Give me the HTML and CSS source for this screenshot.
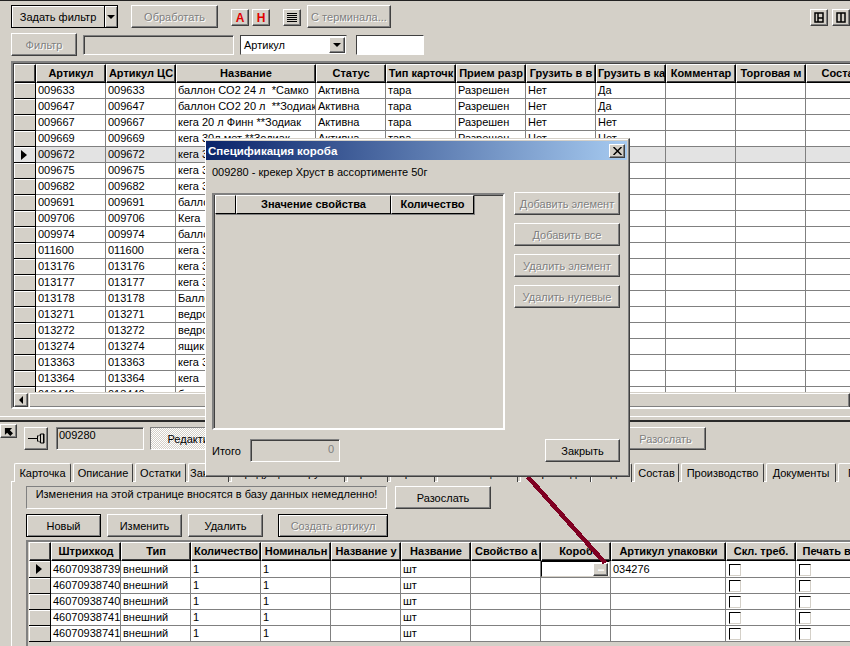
FILE: index.html
```html
<!DOCTYPE html>
<html lang="ru">
<head>
    <meta charset="UTF-8">
    <title>Спецификация короба</title>
    <link rel="stylesheet" href="styles.css">
</head>
<body>
    <!-- Top toolbar -->
    <div class="toolbar">
        <button class="btn btn-filter">Задать фильтр</button>
        <button class="btn btn-drop"><span class="tri-down"></span></button>
        <button class="btn btn-process" disabled>Обработать</button>
        <button class="btn btn-small btn-red btn-a">А</button>
        <button class="btn btn-small btn-red btn-h">Н</button>
        <button class="btn btn-small btn-list">
            <svg width="10" height="9" viewBox="0 0 10 9"><path d="M0 .5h10M0 2.5h10M0 4.5h10M0 6.5h10M0 8.5h10" stroke="#000"/></svg>
        </button>
        <button class="btn btn-terminal" disabled>С терминала...</button>
        <button class="btn btn-small btn-view">
            <svg width="10" height="11" viewBox="0 0 10 11"><path d="M1 1h8v9H1zM4 1v9M4 6h5" fill="none" stroke="#000" stroke-width="1.5"/></svg>
        </button>
        <button class="btn btn-small btn-view2">
            <svg width="10" height="11" viewBox="0 0 10 11"><path d="M1 1h8v9H1zM5 1v9" fill="none" stroke="#000" stroke-width="1.5"/></svg>
        </button>
    </div>

    <div class="filter-row">
        <button class="btn btn-apply" disabled>Фильтр</button>
        <div class="sunken filter-text"></div>
        <div class="combo">
            <span class="combo-value">Артикул</span>
            <span class="btn combo-arrow"><span class="tri-down"></span></span>
        </div>
        <div class="filter-input"></div>
    </div>

    <!-- Articles grid -->
    <div class="grid grid-main">
        <div class="grid-scroll">
            <table class="table table-main">
                <colgroup>
                    <col class="col-ind"><col class="col-n"><col class="col-n"><col class="col-name"><col class="col-n"><col class="col-n"><col class="col-n"><col class="col-n"><col class="col-n"><col class="col-n"><col class="col-n"><col class="col-n">
                </colgroup>
                <tr><th></th><th>Артикул</th><th>Артикул ЦС</th><th>Название</th><th>Статус</th><th>Тип карточк</th><th>Прием разр</th><th>Грузить в в</th><th>Грузить в ка</th><th>Комментар</th><th>Торговая м</th><th>Состав</th></tr>
                <tr><td class="ind"></td><td>009633</td><td>009633</td><td>баллон СО2 24 л &nbsp;*Самко</td><td>Активна</td><td>тара</td><td>Разрешен</td><td>Нет</td><td>Да</td><td></td><td></td><td></td></tr>
                <tr><td class="ind"></td><td>009647</td><td>009647</td><td>баллон СО2 20 л &nbsp;**Зодиак</td><td>Активна</td><td>тара</td><td>Разрешен</td><td>Нет</td><td>Да</td><td></td><td></td><td></td></tr>
                <tr><td class="ind"></td><td>009667</td><td>009667</td><td>кега 20 л Финн **Зодиак</td><td>Активна</td><td>тара</td><td>Разрешен</td><td>Нет</td><td>Нет</td><td></td><td></td><td></td></tr>
                <tr><td class="ind"></td><td>009669</td><td>009669</td><td>кега 30л мет **Зодиак</td><td>Активна</td><td>тара</td><td>Разрешен</td><td>Нет</td><td>Нет</td><td></td><td></td><td></td></tr>
                <tr class="current"><td class="ind"><span class="tri-right"></span></td><td>009672</td><td>009672</td><td>кега 30л</td><td></td><td></td><td></td><td></td><td></td><td></td><td></td><td></td></tr>
                <tr><td class="ind"></td><td>009675</td><td>009675</td><td>кега 30л</td><td></td><td></td><td></td><td></td><td></td><td></td><td></td><td></td></tr>
                <tr><td class="ind"></td><td>009682</td><td>009682</td><td>кега 30л</td><td></td><td></td><td></td><td></td><td></td><td></td><td></td><td></td></tr>
                <tr><td class="ind"></td><td>009691</td><td>009691</td><td>баллон</td><td></td><td></td><td></td><td></td><td></td><td></td><td></td><td></td></tr>
                <tr><td class="ind"></td><td>009706</td><td>009706</td><td>Кега</td><td></td><td></td><td></td><td></td><td></td><td></td><td></td><td></td></tr>
                <tr><td class="ind"></td><td>009974</td><td>009974</td><td>баллон</td><td></td><td></td><td></td><td></td><td></td><td></td><td></td><td></td></tr>
                <tr><td class="ind"></td><td>011600</td><td>011600</td><td>кега 30л</td><td></td><td></td><td></td><td></td><td></td><td></td><td></td><td></td></tr>
                <tr><td class="ind"></td><td>013176</td><td>013176</td><td>кега 30л</td><td></td><td></td><td></td><td></td><td></td><td></td><td></td><td></td></tr>
                <tr><td class="ind"></td><td>013177</td><td>013177</td><td>кега 30л</td><td></td><td></td><td></td><td></td><td></td><td></td><td></td><td></td></tr>
                <tr><td class="ind"></td><td>013178</td><td>013178</td><td>Баллон</td><td></td><td></td><td></td><td></td><td></td><td></td><td></td><td></td></tr>
                <tr><td class="ind"></td><td>013271</td><td>013271</td><td>ведро</td><td></td><td></td><td></td><td></td><td></td><td></td><td></td><td></td></tr>
                <tr><td class="ind"></td><td>013272</td><td>013272</td><td>ведро</td><td></td><td></td><td></td><td></td><td></td><td></td><td></td><td></td></tr>
                <tr><td class="ind"></td><td>013274</td><td>013274</td><td>ящик</td><td></td><td></td><td></td><td></td><td></td><td></td><td></td><td></td></tr>
                <tr><td class="ind"></td><td>013363</td><td>013363</td><td>кега 30л</td><td></td><td></td><td></td><td></td><td></td><td></td><td></td><td></td></tr>
                <tr><td class="ind"></td><td>013364</td><td>013364</td><td>кега</td><td></td><td></td><td></td><td></td><td></td><td></td><td></td><td></td></tr>
                <tr><td class="ind"></td><td>013440</td><td>013440</td><td>баллон</td><td></td><td></td><td></td><td></td><td></td><td></td><td></td><td></td></tr>
            </table>
        </div>
        <div class="hscroll">
            <span class="btn scroll-left"><span class="tri-left"></span></span>
            <span class="btn scroll-thumb"></span>
        </div>
    </div>

    <div class="splitter"></div>

    <!-- Card header -->
    <div class="card-bar">
        <button class="btn btn-collapse">
            <svg width="9" height="9" viewBox="0 0 10 10"><path d="M1 1h8L6.500 3.500 10 7l-3 3-3.500-3.500L1 9z"/></svg>
        </button>
        <div class="card-tools">
            <button class="btn btn-pin">
                <svg width="17" height="11" viewBox="0 0 17 11"><path d="M0 5.500h9M9.500 2.500v6M10 3.500l2-2M10 7.500l2 2M12.500 1h3.500v9h-3.500zM15.500 1v9" fill="none" stroke="#000"/></svg>
            </button>
            <div class="sunken card-code">009280</div>
            <button class="btn btn-edit">Редактировать</button>
            <button class="btn btn-send-off" disabled>Разослать</button>
        </div>
    </div>

    <div class="tabs">
        <div class="tab">Карточка</div>
        <div class="tab">Описание</div>
        <div class="tab">Остатки</div>
        <div class="tab">Заказы</div>
        <div class="tab">Продукция и группы</div>
        <div class="tab">Цены</div>
        <div class="tab">Сроки</div>
        <div class="tab">Поставщики</div>
        <div class="tab tab-active">Штрихкоды</div>
        <div class="tab">Коды</div>
        <div class="tab">Состав</div>
        <div class="tab">Производство</div>
        <div class="tab">Документы</div>
        <div class="tab">Прочее</div>
    </div>

    <div class="page">
        <div class="info-row">
            <div class="info">Изменения на этой странице вносятся в базу данных немедленно!</div>
            <button class="btn btn-send">Разослать</button>
        </div>
        <div class="actions">
            <button class="btn btn-default btn-action">Новый</button>
            <button class="btn btn-action">Изменить</button>
            <button class="btn btn-action">Удалить</button>
            <button class="btn btn-default btn-create" disabled>Создать артикул</button>
        </div>
        <div class="grid grid-codes">
            <table class="table table-codes">
                <colgroup>
                    <col class="col-ind"><col class="col-n"><col class="col-n"><col class="col-n"><col class="col-n"><col class="col-n"><col class="col-n"><col class="col-n"><col class="col-n"><col class="col-pack"><col class="col-n"><col class="col-n">
                </colgroup>
                <tr><th></th><th>Штрихкод</th><th>Тип</th><th>Количество</th><th>Номинальн</th><th>Название у</th><th>Название</th><th>Свойство а</th><th>Короб</th><th>Артикул упаковки</th><th>Скл. треб.</th><th>Печать в к</th></tr>
                <tr><td class="ind"><span class="tri-right"></span></td><td>46070938739</td><td>внешний</td><td>1</td><td>1</td><td></td><td>шт</td><td></td><td class="cell-edit"><div class="editor"><span class="btn editor-btn">...</span></div></td><td>034276</td><td><span class="check"></span></td><td><span class="check"></span></td></tr>
                <tr><td class="ind"></td><td>46070938740</td><td>внешний</td><td>1</td><td>1</td><td></td><td>шт</td><td></td><td></td><td></td><td><span class="check"></span></td><td><span class="check"></span></td></tr>
                <tr><td class="ind"></td><td>46070938740</td><td>внешний</td><td>1</td><td>1</td><td></td><td>шт</td><td></td><td></td><td></td><td><span class="check"></span></td><td><span class="check"></span></td></tr>
                <tr><td class="ind"></td><td>46070938741</td><td>внешний</td><td>1</td><td>1</td><td></td><td>шт</td><td></td><td></td><td></td><td><span class="check"></span></td><td><span class="check"></span></td></tr>
                <tr><td class="ind"></td><td>46070938741</td><td>внешний</td><td>1</td><td>1</td><td></td><td>шт</td><td></td><td></td><td></td><td><span class="check"></span></td><td><span class="check"></span></td></tr>
            </table>
        </div>
    </div>

    <!-- Red annotation line drawn on the screenshot -->
    <svg class="arrow" width="90" height="100" viewBox="0 0 90 100">
        <path d="M3 6L80 92" fill="none" stroke="#7f0022" stroke-width="4.500"/>
    </svg>

    <!-- Dialog -->
    <div class="dialog">
        <div class="dialog-title">
            <span>Спецификация короба</span>
            <button class="btn dialog-close">
                <svg width="9" height="8" viewBox="0 0 9 8"><path d="M.5 0l8 8M8.500 0l-8 8" stroke="#000" stroke-width="1.500"/></svg>
            </button>
        </div>
        <div class="dialog-body">
            <div class="dialog-label">009280 - крекер Хруст в ассортименте 50г</div>
            <div class="dialog-main">
                <div class="grid grid-spec">
                    <div class="spec-head">
                        <div class="hcell spec-ind"></div>
                        <div class="hcell spec-value">Значение свойства</div>
                        <div class="hcell spec-qty">Количество</div>
                    </div>
                </div>
                <div class="dialog-buttons">
                    <button class="btn btn-side" disabled>Добавить элемент</button>
                    <button class="btn btn-side" disabled>Добавить все</button>
                    <button class="btn btn-side" disabled>Удалить элемент</button>
                    <button class="btn btn-side" disabled>Удалить нулевые</button>
                </div>
            </div>
            <div class="dialog-footer">
                <span class="total-label">Итого</span>
                <div class="sunken total">0</div>
                <button class="btn btn-close">Закрыть</button>
            </div>
        </div>
    </div>
</body>
</html>
```

FILE: styles.css
```css
:root {
    --bg: #d4d0c8;
    --line: #808080;
    --dark: #404040;
}

* {
    margin: 0;
    padding: 0;
    box-sizing: border-box;
    font-family: "Liberation Sans", Arial, sans-serif;
    font-size: 11px;
}

html, body {
    width: 850px;
    height: 646px;
    overflow: hidden;
}

body {
    position: relative;
    background-color: var(--bg);
    color: #000;
    border-top: 1px solid #222;
}

/* Buttons */
.btn {
    display: flex;
    align-items: center;
    justify-content: center;
    flex: none;
    height: 23px;
    background-color: var(--bg);
    border: 1px solid;
    border-color: #fff var(--dark) var(--dark) #fff;
    box-shadow: inset -1px -1px var(--line);
    color: #000;
    white-space: nowrap;
}

.btn:disabled {
    color: var(--line);
    text-shadow: 1px 1px #fff;
}

.btn-default {
    border-color: #000;
    box-shadow: inset 1px 1px #fff, inset -1px -1px var(--line);
}

.btn-small {
    width: 18px;
    height: 17px;
    margin-top: 4px;
}

.btn-red {
    color: #e00000;
    font-weight: bold;
    font-size: 12px;
}

.sunken {
    border: 1px solid;
    border-color: var(--line) #fff #fff var(--line);
    box-shadow: inset 1px 1px var(--dark);
}

.tri-down {
    border-left: 4px solid transparent;
    border-right: 4px solid transparent;
    border-top: 4px solid #000;
}

.tri-left {
    border-top: 4px solid transparent;
    border-bottom: 4px solid transparent;
    border-right: 4px solid #000;
}

.tri-right {
    display: block;
    margin-left: 7px;
    border-top: 5px solid transparent;
    border-bottom: 5px solid transparent;
    border-left: 6px solid #000;
}

/* Toolbar */
.toolbar {
    display: flex;
    align-items: flex-start;
    height: 32px;
    padding: 4px 0 0 11px;
}

.btn-filter {
    width: 93px;
    border-color: #000;
    border-right: none;
    box-shadow: inset 1px 1px #fff;
}

.btn-drop {
    width: 14px;
    border-color: #000;
    box-shadow: inset 1px 1px #fff, inset -1px -1px var(--line);
}

.btn-process {
    width: 87px;
    margin-left: 13px;
}

.btn-a {
    margin-left: 13px;
}

.btn-h {
    margin-left: 3px;
}

.btn-list {
    margin-left: 13px;
}

.btn-terminal {
    width: 84px;
    margin-left: 6px;
}

.btn-view {
    margin-left: 419px;
}

.btn-view2 {
    margin-left: 4px;
}

/* Filter line */
.filter-row {
    display: flex;
    align-items: flex-start;
    height: 28px;
    padding-left: 11px;
}

.btn-apply {
    width: 66px;
}

.filter-text {
    width: 151px;
    height: 20px;
    margin: 2px 0 0 6px;
}

.combo {
    display: flex;
    justify-content: space-between;
    width: 107px;
    height: 20px;
    margin: 2px 0 0 6px;
    padding: 1px;
    background-color: #fff;
    border: 1px solid;
    border-color: var(--dark) var(--bg) var(--bg) var(--dark);
}

.combo-value {
    padding-left: 2px;
    line-height: 17px;
}

.combo-arrow {
    width: 16px;
    height: 16px;
}

.filter-input {
    width: 68px;
    height: 20px;
    margin: 2px 0 0 9px;
    background-color: #fff;
    border: 1px solid;
    border-color: var(--dark) #fff #fff var(--dark);
}

/* Data grids */
.grid {
    border: 2px solid;
    border-color: var(--line) #fff #fff var(--line);
    box-shadow: inset 1px 1px var(--dark);
    overflow: hidden;
}

.grid-main {
    height: 348px;
    margin-left: 11px;
    padding: 1px 0 0 1px;
    border-right: none;
}

.grid-scroll {
    height: 328px;
    overflow: hidden;
}

.table {
    table-layout: fixed;
    border-collapse: separate;
    border-spacing: 0;
}

.table-main {
    width: 862px;
}

.table-codes {
    width: 837px;
}

.col-ind {
    width: 22px;
}

.col-n {
    width: 70px;
}

.col-name {
    width: 140px;
}

.col-pack {
    width: 115px;
}

.table th {
    height: 19px;
    padding: 0 1px 2px;
    overflow: hidden;
    white-space: nowrap;
    background-color: var(--bg);
    border: 1px solid;
    border-color: #fff #000 #000 #fff;
    box-shadow: inset -1px -1px var(--dark);
    font-weight: bold;
    text-align: center;
}

.table td {
    height: 16px;
    padding: 0 2px;
    overflow: hidden;
    white-space: nowrap;
    background-color: #fff;
    border-right: 1px solid var(--line);
    border-bottom: 1px solid var(--line);
    line-height: 15px;
}

.table tr.current td {
    background-color: #e3e3e3;
}

.table td.ind {
    padding: 0;
    background-color: var(--bg);
    border-right: 1px solid #000;
    border-bottom: 1px solid #000;
    box-shadow: inset 1px 1px #fff;
}

/* Bottom scrollbar */
.hscroll {
    display: flex;
    height: 15px;
    margin-top: 1px;
    gap: 1px;
}

.scroll-left {
    width: 14px;
    height: 14px;
}

.scroll-thumb {
    flex: 1;
    height: 15px;
}

.splitter {
    height: 6px;
    margin-top: 7px;
    border-top: 1px solid #fff;
    border-bottom: 2px solid #2a2a2a;
}

/* Card header */
.card-bar {
    display: flex;
    align-items: flex-start;
    height: 41px;
    padding-top: 2px;
}

.btn-collapse {
    width: 17px;
    height: 14px;
}

.card-tools {
    display: flex;
    margin: 3px 0 0 7px;
}

.btn-pin {
    width: 24px;
}

.card-code {
    width: 88px;
    height: 23px;
    margin-left: 8px;
    padding: 1px 2px;
}

.btn-edit {
    width: 111px;
    margin-left: 6px;
    border-color: var(--line) #fff #fff var(--line);
    box-shadow: none;
    background: repeating-conic-gradient(#fff 0 25%, var(--bg) 0 50%) 0 0 / 2px 2px;
}

.btn-send-off {
    width: 81px;
    margin-left: 364px;
}

/* Tabs */
.tabs {
    display: grid;
    grid-template-columns: 59px 62px 53px 43px 116px 43px 47px 83px 71px 43px 47px 85px 72px 60px;
    height: 18px;
    padding-left: 14px;
    overflow-x: clip;
}

.tab {
    overflow: hidden;
    margin-right: 2px;
    padding-top: 3px;
    background-color: var(--bg);
    border-top: 1px solid #fff;
    border-left: 1px solid #fff;
    border-right: 1px solid var(--dark);
    border-radius: 2px 2px 0 0;
    white-space: nowrap;
    text-align: center;
}

.tab-active {
    position: relative;
    z-index: 1;
    height: 19px;
    margin-right: 0;
}

.page {
    height: 170px;
    margin-left: 11px;
    padding: 4px 0 0 14px;
    border-top: 1px solid #fff;
    border-left: 1px solid #fff;
}

.info-row {
    display: flex;
    gap: 8px;
}

.info {
    width: 361px;
    height: 23px;
    padding-top: 1px;
    border: 1px solid;
    border-color: var(--line) #fff #fff var(--line);
    text-align: center;
}

.btn-send {
    width: 96px;
}

.actions {
    display: flex;
    gap: 6px;
    margin-top: 5px;
}

.btn-action {
    width: 75px;
}

.btn-create {
    width: 110px;
    margin-left: 9px;
}

.grid-codes {
    width: 824px;
    height: 120px;
    margin-top: 3px;
    padding-left: 1px;
    border-right: none;
    border-bottom: none;
    box-shadow: none;
}

.cell-edit {
    position: relative;
}

.table td.cell-edit {
    padding: 0;
    overflow: visible;
}

.editor {
    display: flex;
    justify-content: flex-end;
    height: 16px;
    padding: 1px;
    background-color: #fff;
    border: 1px solid;
    border-color: #000 var(--bg) var(--bg) #000;
}

.editor-btn {
    width: 15px;
    height: 13px;
    padding-bottom: 5px;
    font-weight: bold;
    color: #fff;
    letter-spacing: -1px;
}

.check {
    display: block;
    width: 12px;
    height: 12px;
    margin: 1px 0 0 1px;
    background-color: #fff;
    border: 1px solid;
    border-color: #000 var(--bg) var(--bg) #000;
}

/* Annotation */
.arrow {
    position: absolute;
    z-index: 2;
    left: 525px;
    top: 470px;
    shape-rendering: crispEdges;
}

/* Dialog */
.dialog {
    position: absolute;
    z-index: 3;
    left: 205px;
    top: 137px;
    width: 425px;
    height: 339px;
    background-color: var(--bg);
    border: 1px solid;
    border-color: var(--bg) var(--dark) var(--dark) #fff;
    box-shadow: inset -1px -1px var(--line), inset 0 1px #fff;
}

.dialog-title {
    display: flex;
    align-items: center;
    justify-content: space-between;
    height: 19px;
    margin: 2px 2px 0 0;
    padding: 0 2px;
    background: linear-gradient(to right, #0a246a, #a6caf0);
}

.dialog-title span {
    color: #fff;
    font-weight: bold;
    font-size: 11.500px;
}

.dialog-close {
    width: 16px;
    height: 14px;
}

.dialog-body {
    padding: 0 9px 0 6px;
}

.dialog-label {
    height: 32px;
    padding-top: 6px;
}

.dialog-main {
    display: flex;
    gap: 9px;
}

.grid-spec {
    width: 293px;
    height: 237px;
    margin-top: 1px;
    padding: 0 0 0 1px;
}

.spec-head {
    display: flex;
}

.hcell {
    height: 19px;
    background-color: var(--bg);
    border: 1px solid;
    border-color: #fff #000 #000 #fff;
    box-shadow: 1px 1px var(--line);
    font-weight: bold;
    line-height: 16px;
    text-align: center;
}

.spec-ind {
    width: 21px;
}

.spec-value {
    width: 155px;
}

.spec-qty {
    width: 83px;
}

.dialog-buttons {
    display: flex;
    flex-direction: column;
    gap: 8px;
}

.btn-side {
    width: 106px;
}

.dialog-footer {
    display: flex;
    align-items: center;
    margin-top: 9px;
}

.total-label {
    width: 38px;
}

.total {
    width: 90px;
    height: 23px;
    padding: 3px 5px;
    color: var(--line);
    text-align: right;
}

.btn-close {
    width: 75px;
    margin-left: 205px;
}
```
